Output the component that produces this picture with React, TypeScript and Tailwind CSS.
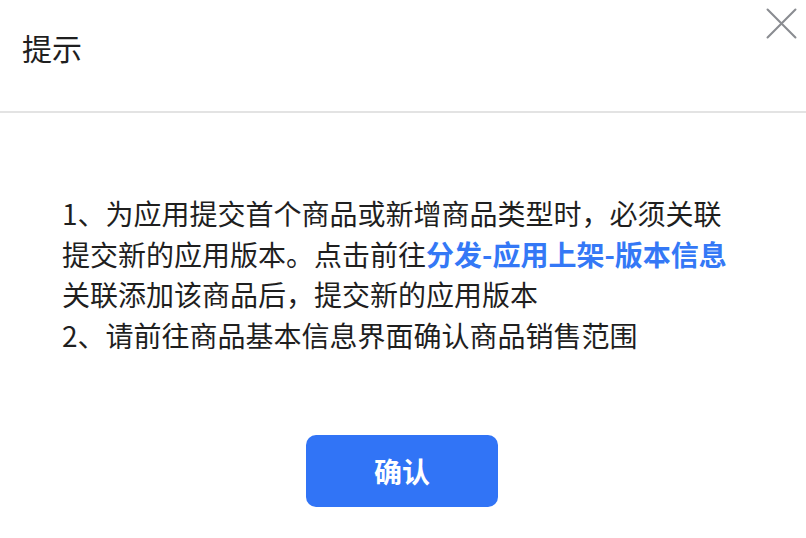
import { useState } from "react";

const FONT = {
  fontFamily: '"PingFang SC", "Noto Sans CJK SC", "Noto Sans", sans-serif',
};

// Dialog: tip about linking products to an app version
export default function App() {
  const [open, setOpen] = useState(true);

  if (!open) return <div className="h-[538px] w-[806px] bg-white" />;

  return (
    <div
      className="relative flex h-[538px] w-[806px] flex-col bg-white text-[#1f1f1f]"
      style={FONT}
    >
      {/* Header */}
      <div className="flex h-[113px] shrink-0 items-start border-b-2 border-[#e3e3e3] pl-[22px] pt-[27px]">
        <h1 className="text-[30px] font-normal leading-[40px]">提示</h1>
      </div>

      {/* Close */}
      <button
        onClick={() => setOpen(false)}
        className="absolute right-[9px] top-[8px] flex h-[31px] w-[31px] items-center justify-center"
        aria-label="关闭"
      >
        <svg
          viewBox="0 0 30 30"
          className="h-[31px] w-[31px]"
          fill="none"
          stroke="#8a8c91"
          strokeWidth="2"
          strokeLinecap="round"
        >
          <path d="M1.5 1.5l27 27M28.5 1.5l-27 27" />
        </svg>
      </button>

      {/* Body */}
      <div className="flex flex-1 flex-col items-center pt-[80px]">
        <div className="w-[682px] text-[28px] leading-[40.5px]">
          <p className="whitespace-nowrap">1、为应用提交首个商品或新增商品类型时，必须关联</p>
          <p className="whitespace-nowrap">
            提交新的应用版本。点击前往
            <a href="#" className="font-semibold text-[#3478f6]">
              分发-应用上架-版本信息
            </a>
          </p>
          <p className="whitespace-nowrap">关联添加该商品后，提交新的应用版本</p>
          <p className="whitespace-nowrap">2、请前往商品基本信息界面确认商品销售范围</p>
        </div>

        <button
          onClick={() => setOpen(false)}
          className="ml-[-2px] mt-[80px] flex h-[72px] w-[192px] items-center justify-center rounded-[10px] bg-[#3174f6] text-[28px] font-bold text-white"
        >
          确认
        </button>
      </div>
    </div>
  );
}
